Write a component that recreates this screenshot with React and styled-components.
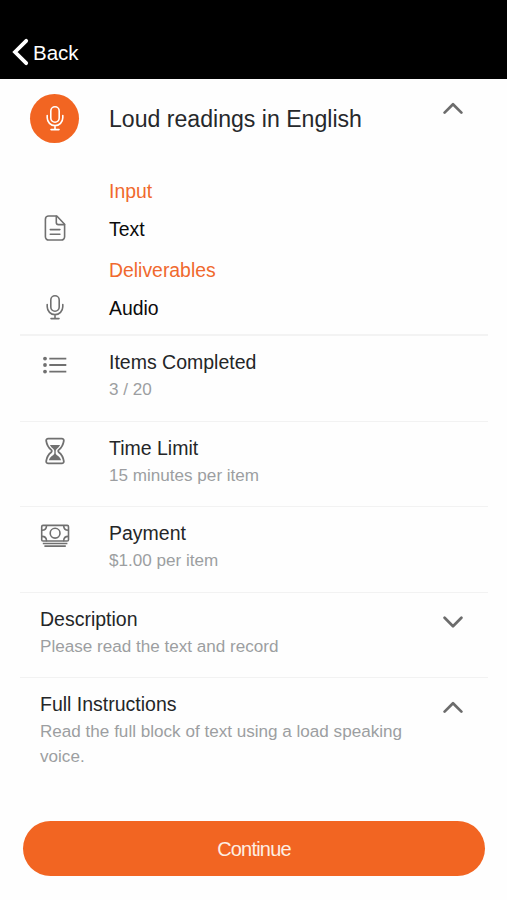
import { useState } from "react";
import styled, { createGlobalStyle } from "styled-components";

const GlobalStyle = createGlobalStyle`
  * {
    box-sizing: border-box;
  }

  body {
    margin: 0;
    background-color: #fefefe;
    font-family: "Liberation Sans", Arial, sans-serif;
  }
`;

const Screen = styled.div`
  display: flex;
  flex-direction: column;
  height: 900px;
  overflow: hidden;
`;

const NavBar = styled.header`
  display: flex;
  align-items: flex-end;
  height: 79px;
  padding: 0 0 11px 12px;
  background-color: #000;
`;

const BackButton = styled.button`
  display: flex;
  align-items: center;
  gap: 4px;
  padding: 0;
  border: none;
  background: none;
  color: #fff;
  font-family: inherit;
  font-size: 20.5px;
  line-height: 30px;
  cursor: pointer;

  svg {
    margin-bottom: 2px;
  }
`;

const Content = styled.main`
  flex: 1;
  padding: 0 19px 0 20px;
`;

const Hero = styled.section`
  display: grid;
  grid-template-columns: 69px 1fr 20px;
  column-gap: 20px;
  align-items: center;
  height: 78px;
  padding-right: 25px;
`;

const Badge = styled.div`
  display: flex;
  align-items: center;
  justify-content: center;
  justify-self: center;
  width: 49px;
  height: 49px;
  border-radius: 50%;
  background-color: #f26522;
  color: #fff;
`;

const TaskName = styled.h1`
  margin: 2px 0 0;
  color: #26282b;
  font-size: 23.1px;
  font-weight: 400;
  white-space: nowrap;
`;

const Toggle = styled.button`
  display: flex;
  align-self: start;
  margin-top: ${({ $top }) => $top}px;
  padding: 0;
  border: none;
  background: none;
  color: #6c6c6c;
  cursor: pointer;
`;

const Formats = styled.section`
  height: 179px;
  padding-top: 14px;
  border-bottom: 2px solid #f3f3f3;
`;

const Format = styled.div`
  display: grid;
  grid-template-columns: 69px 1fr;
  grid-template-rows: 39px 38px;
  column-gap: 20px;
  align-items: center;
  margin-bottom: 2px;
`;

const FormatLabel = styled.span`
  grid-column: 2;
  padding-top: 2px;
  color: #f0692e;
  font-size: 19.4px;
`;

const FormatValue = styled.span`
  color: #0b0b0b;
  font-size: 19.4px;
`;

const IconSlot = styled.div`
  display: flex;
  justify-content: center;
  padding-top: ${({ $top = 0 }) => $top}px;
  padding-bottom: ${({ $bottom = 0 }) => $bottom}px;
  color: #707070;
`;

const Row = styled.section`
  display: grid;
  grid-template-columns: 69px 1fr;
  column-gap: 20px;
  align-items: start;
  height: 85.6px;
  padding-top: 12px;
  border-bottom: 1px solid #f2f2f2;
`;

const Panel = styled(Row)`
  grid-template-columns: 380px 20px;
  justify-content: space-between;
  padding-left: 20px;
  padding-right: 25px;
  border-bottom-width: ${({ $last }) => ($last ? 0 : 1)}px;
`;

const Title = styled.h2`
  margin: 0;
  color: #242628;
  font-size: 19.5px;
  font-weight: 400;
  line-height: 29px;
`;

const Detail = styled.p`
  margin: 0;
  padding-top: 1px;
  color: #9c9ea1;
  font-size: 17.1px;
  line-height: 24.5px;
`;

const Footer = styled.footer`
  padding: 0 22px 24px 23px;
`;

const ContinueButton = styled.button`
  width: 100%;
  height: 55px;
  padding: 1px 0 0;
  border: none;
  border-radius: 28px;
  background-color: #f26522;
  color: #fdeee2;
  font-family: inherit;
  font-size: 20px;
  letter-spacing: -0.8px;
  cursor: pointer;
`;

const Icon = ({ size = 32, width = 1.6, children }) => (
  <svg
    width={size}
    height={size}
    viewBox={`0 0 ${size} ${size}`}
    fill="none"
    stroke="currentColor"
    strokeWidth={width}
    strokeLinecap="round"
    strokeLinejoin="round"
  >
    {children}
  </svg>
);

const MicIcon = () => (
  <Icon>
    <rect x="11.8" y="4.8" width="8.4" height="15.4" rx="4.2" />
    <path d="M8.2 13.5v2.3a7.8 7.8 0 0 0 15.6 0v-2.3M16 23.6v3.8M12 27.6h8" />
  </Icon>
);

const DocumentIcon = () => (
  <Icon>
    <path d="M17.8 4H9.6a3.2 3.2 0 0 0-3.2 3.2v17.6A3.2 3.2 0 0 0 9.6 28h12.8a3.2 3.2 0 0 0 3.2-3.2V12.3z" />
    <path d="M17.3 4.2v6.2a2.2 2.2 0 0 0 2.2 2.2h6M11.3 17.6h9.6M11.3 22.2h9.6" />
  </Icon>
);

const ListIcon = () => (
  <Icon width={1.9}>
    <path d="M10.3 9.6h17M10.3 16h17M10.3 22.6h17" strokeLinecap="butt" />
    <g fill="currentColor" stroke="none">
      <circle cx="6" cy="9.6" r="1.9" />
      <circle cx="6" cy="16" r="1.9" />
      <circle cx="6" cy="22.6" r="1.9" />
    </g>
  </Icon>
);

const HourglassIcon = () => (
  <Icon width={1.8}>
    <path d="M9.2 3.6h13.6c1.3 0 2.2 1 2 2.3-.7 4.6-2.4 6.9-5 9-.8.7-.8 1.7 0 2.3 2.6 2 4.3 4.4 5 8.9.2 1.3-.7 2.3-2 2.3H9.2c-1.3 0-2.2-1-2-2.3.7-4.5 2.4-6.9 5-8.9.8-.6.8-1.6 0-2.3-2.6-2.1-4.3-4.4-5-9-.2-1.3.7-2.3 2-2.3z" />
    <path
      d="M10.9 10h10.2c-.8 1.6-2 2.9-3.4 4-.7.6-1 1.1-1 2v2.1c0 1 .5 1.5 1.3 2.1 2.2 1.5 3.5 2.8 4.1 5.1H9.9c.6-2.3 1.9-3.6 4.1-5.1.8-.6 1.3-1.1 1.3-2.1V16c0-.9-.3-1.4-1-2-1.4-1.1-2.6-2.4-3.4-4z"
      fill="currentColor"
      stroke="none"
    />
  </Icon>
);

const CashIcon = () => (
  <Icon width={1.6}>
    <rect x="2.7" y="5.4" width="26.8" height="15.6" rx="1.3" />
    <circle cx="16.1" cy="13.2" r="4.9" />
    <path d="M2.9 10.2c2.9 0 4.6-1.7 4.6-4.4M29.3 10.2c-2.9 0-4.6-1.7-4.6-4.4M2.9 16.4c2.9 0 4.6 1.7 4.6 4.4M29.3 16.4c-2.9 0-4.6 1.7-4.6 4.4" />
    <path d="M3.8 23.5h24.6M5.4 26.1h21.4" strokeLinecap="butt" />
  </Icon>
);

const Chevron = ({ open }) => (
  <Icon size={20} width={2.7}>
    <path d={open ? "M1.6 14.6L10 6.2l8.4 8.4" : "M1.6 5.8L10 14.2l8.4-8.4"} />
  </Icon>
);

const formats = [
  { label: "Input", value: "Text", icon: <DocumentIcon /> },
  { label: "Deliverables", value: "Audio", icon: <MicIcon /> },
];

const facts = [
  { title: "Items Completed", detail: "3 / 20", icon: <ListIcon /> },
  { title: "Time Limit", detail: "15 minutes per item", icon: <HourglassIcon /> },
  { title: "Payment", detail: "$1.00 per item", icon: <CashIcon /> },
];

const App = () => {
  const [heroOpen, setHeroOpen] = useState(true);
  const [descriptionOpen, setDescriptionOpen] = useState(false);
  const [instructionsOpen, setInstructionsOpen] = useState(true);

  return (
    <Screen>
      <GlobalStyle />
      <NavBar>
        <BackButton>
          <svg width="17" height="28" viewBox="0 0 17 28" fill="none">
            <path d="M14.2 2.8L3 14l11.2 11.2" stroke="#fff" strokeWidth="3.8" strokeLinecap="round" />
          </svg>
          Back
        </BackButton>
      </NavBar>

      <Content>
        <Hero>
          <Badge>
            <MicIcon />
          </Badge>
          <TaskName>Loud readings in English</TaskName>
          <Toggle $top={19} aria-label="Toggle task" onClick={() => setHeroOpen(!heroOpen)}>
            <Chevron open={heroOpen} />
          </Toggle>
        </Hero>

        {heroOpen && (
          <Formats>
            {formats.map(({ label, value, icon }) => (
              <Format key={label}>
                <FormatLabel>{label}</FormatLabel>
                <IconSlot $bottom={2}>{icon}</IconSlot>
                <FormatValue>{value}</FormatValue>
              </Format>
            ))}
          </Formats>
        )}

        {facts.map(({ title, detail, icon }) => (
          <Row key={title}>
            <IconSlot $top={1}>{icon}</IconSlot>
            <div>
              <Title>{title}</Title>
              <Detail>{detail}</Detail>
            </div>
          </Row>
        ))}

        <Panel>
          <div>
            <Title>Description</Title>
            <Detail>Please read the text and record</Detail>
          </div>
          <Toggle
            $top={7}
            aria-label="Toggle description"
            onClick={() => setDescriptionOpen(!descriptionOpen)}
          >
            <Chevron open={descriptionOpen} />
          </Toggle>
        </Panel>
        <Panel $last>
          <div>
            <Title>Full Instructions</Title>
            <Detail>Read the full block of text using a load speaking voice.</Detail>
          </div>
          <Toggle
            $top={7}
            aria-label="Toggle instructions"
            onClick={() => setInstructionsOpen(!instructionsOpen)}
          >
            <Chevron open={instructionsOpen} />
          </Toggle>
        </Panel>
      </Content>

      <Footer>
        <ContinueButton>Continue</ContinueButton>
      </Footer>
    </Screen>
  );
};

export default App;
